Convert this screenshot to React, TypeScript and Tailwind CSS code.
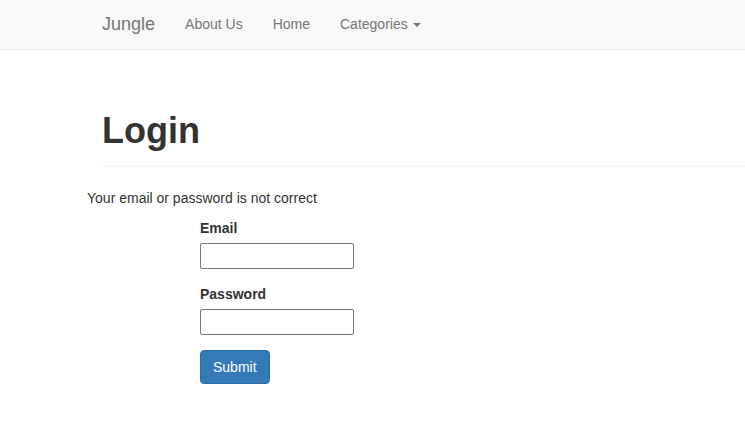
import React from 'react'

function Navbar() {
  return (
    <nav className="h-[50px] border-b border-[#e7e7e7] bg-[#f8f8f8]">
      <div className="flex h-full items-center pb-[1px] pl-[87px] text-[14px] text-[#777]">
        <a className="px-[15px] text-[18px] leading-[20px]">Jungle</a>
        <a className="px-[15px] leading-[20px]">About Us</a>
        <a className="px-[15px] leading-[20px]">Home</a>
        <a className="flex items-center px-[15px] leading-[20px]">
          Categories
          <span className="ml-[5px] mt-[1px] h-0 w-0 border-x-[4px] border-t-[4px] border-x-transparent border-t-[#777]" />
        </a>
      </div>
    </nav>
  )
}

function Field({ label, type }: { label: string; type: string }) {
  return (
    <div className="mb-[15px]">
      <label className="mb-[5px] block font-bold leading-[20px]">{label}</label>
      <input
        type={type}
        className="block h-[26px] w-[154px] rounded-[2px] border border-[#767676] bg-white px-[2px]"
      />
    </div>
  )
}

export default function App() {
  return (
    <div className="min-h-[448px] bg-white text-[14px] leading-[20px] text-[#333] [font-family:'Liberation_Sans',Arial,sans-serif]">
      <Navbar />
      <main className="overflow-hidden">
        {/* page header */}
        <div className="ml-[102px] mt-[61px] border-b border-[#eee] pb-[15px]">
          <h1 className="text-[36px] font-bold leading-[40px]">Login</h1>
        </div>
        <p className="ml-[87px] mt-[21px] leading-[20px]">Your email or password is not correct</p>
        <form className="ml-[200px] mt-[10px]">
          <Field label="Email" type="email" />
          <Field label="Password" type="password" />
          <button
            type="button"
            className="h-[34px] rounded-[4px] border border-[#2e6da4] bg-[#337ab7] px-[12px] text-[14px] text-white"
          >
            Submit
          </button>
        </form>
      </main>
    </div>
  )
}
